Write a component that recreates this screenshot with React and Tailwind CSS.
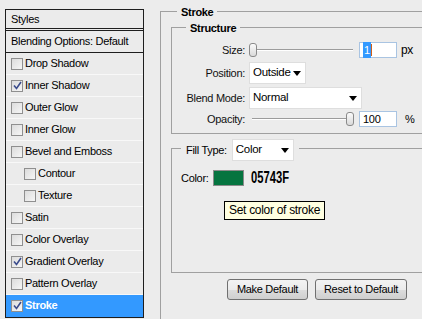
import React from 'react';

const styleRows = [
  { label: 'Drop Shadow' },
  { label: 'Inner Shadow', checked: true },
  { label: 'Outer Glow' },
  { label: 'Inner Glow' },
  { label: 'Bevel and Emboss' },
  { label: 'Contour', sub: true },
  { label: 'Texture', sub: true },
  { label: 'Satin' },
  { label: 'Color Overlay' },
  { label: 'Gradient Overlay', checked: true },
  { label: 'Pattern Overlay' },
  { label: 'Stroke', checked: true, active: true },
];

const Checkbox = ({ checked }) => (
  <span className="relative flex h-[12px] w-[12px] shrink-0 items-center justify-center border border-[#8f8f8f] bg-gradient-to-br from-[#dcdcdc] to-[#f6f6f6]">
    {checked && (
      <svg width="9" height="9" viewBox="0 0 9 9" className="absolute">
        <path d="M1 4.5 L3.5 7.5 L8 1" fill="none" stroke="#3b4c8c" strokeWidth="1.6" />
      </svg>
    )}
  </span>
);

const Arrow = () => (
  <svg width="8" height="5" viewBox="0 0 8 5" className="shrink-0">
    <path d="M0 0 H8 L4 5 Z" fill="#000" />
  </svg>
);

const Select = ({ value, width }) => (
  <div
    className="flex h-[22px] items-center justify-between border border-[#dedede] bg-white pl-[3px] pr-[4px] text-[11.5px] tracking-[-0.3px]"
    style={{ width }}
  >
    <span>{value}</span>
    <Arrow />
  </div>
);

const Slider = ({ pos }) => (
  <div className="relative h-[14px] w-[104px]">
    <div className="absolute left-[3px] right-0 top-[6px] h-[2px] border-t border-[#9c9c9c] border-b border-b-white" />
    <div
      className="absolute top-0 h-[14px] w-[8px] rounded-[3px] border border-[#8a8a8a] bg-gradient-to-b from-[#fbfbfb] to-[#d9d9d9]"
      style={{ left: pos }}
    />
  </div>
);

const Field = ({ children }) => (
  <div className="flex h-[16px] w-[38px] items-center border border-[#a9c4e2] bg-white pl-[3px] text-[11px]">
    {children}
  </div>
);

const Row = ({ label, children, className }) => (
  <div className={`flex items-center ${className || ''}`}>
    <span className="w-[73px] text-right text-[11px] text-[#111]">{label}</span>
    <div className="ml-[4px] flex items-center">{children}</div>
  </div>
);

const Button = ({ children, width }) => (
  <button
    className="h-[21px] rounded-[3px] border border-[#707070] bg-[linear-gradient(#f3f3f3_0%,#ebebeb_50%,#dddddd_51%,#cfcfcf_100%)] text-[11px] text-black"
    style={{ width }}
  >
    {children}
  </button>
);

export default function App() {
  return (
    <div
      className="flex h-[319px] w-[422px] overflow-hidden bg-[#ececec] tracking-[-0.3px] text-black"
      style={{ fontFamily: '"Liberation Sans", Arial, sans-serif' }}
    >
      {/* Styles list */}
      <div className="ml-[5px] mt-[9px] w-[139px] shrink-0 self-start border border-[#1e1e1e] bg-[#ebebeb] text-[11px]">
        <div className="flex h-[21px] items-center border-b-[3px] border-double border-[#1e1e1e] pl-[5px]">Styles</div>
        <div className="flex h-[22px] items-center border-b border-[#1e1e1e] pl-[5px]">Blending Options: Default</div>
        {styleRows.map((r) => (
          <div
            key={r.label}
            className={`flex h-[22px] items-center gap-[2px] border-b ${
              r.active ? 'border-[#3399ff] bg-[#3399ff] font-bold text-white' : 'border-[#f8f8f8]'
            } ${r.sub ? 'pl-[18px]' : 'pl-[5px]'}`}
          >
            <Checkbox checked={r.checked} />
            <span>{r.label}</span>
          </div>
        ))}
      </div>

      {/* Stroke settings */}
      <div className="flex-1 pl-[16px] pt-[11px]">
        <div className="relative h-[340px] w-[320px] border-l border-t border-[#a0a0a0] pl-[10px] pt-[15px]">
          <span className="absolute left-[16px] top-[-8px] bg-[#ececec] px-[4px] text-[11px] font-bold">Stroke</span>

          {/* Structure */}
          <div className="relative h-[107px] border-b border-l border-t border-[#a0a0a0] pt-[13px]">
            <span className="absolute left-[14px] top-[-8px] bg-[#ececec] px-[4px] text-[11px] font-bold">Structure</span>
            <Row label="Size:">
              <Slider pos={0} />
              <div className="ml-[6px]">
                <Field>
                  <span className="bg-[#3399ff] px-[1px] text-white">1</span>
                  <span className="h-[12px] w-[1px] bg-[#d0601a]" />
                </Field>
              </div>
              <span className="ml-[4px] text-[12px]">px</span>
            </Row>
            <Row label="Position:" className="mt-[3px]">
              <Select value="Outside" width={57} />
            </Row>
            <Row label="Blend Mode:" className="mt-[3px]">
              <Select value="Normal" width={113} />
            </Row>
            <Row label="Opacity:" className="mt-[2px]">
              <Slider pos={97} />
              <div className="ml-[6px]">
                <Field>100</Field>
              </div>
              <span className="ml-[8px] text-[11px]">%</span>
            </Row>
          </div>

          {/* Fill */}
          <div className="relative mt-[14px] h-[125px] border-b border-l border-t border-[#a0a0a0] pl-[9px] pt-[21px]">
            <div className="absolute left-[9px] top-[-10px] flex items-center gap-[5px] bg-[#ececec] px-[5px] text-[11px]">
              <span>Fill Type:</span>
              <Select value="Color" width={62} />
            </div>
            <div className="flex items-center">
              <span className="text-[11px]">Color:</span>
              <div className="ml-[4px] h-[16px] w-[31px] border border-[#8a8a8a] bg-[#05743f]" />
              <span className="ml-[7px] inline-block origin-left scale-x-[0.7] text-[16px] font-bold leading-none tracking-normal">
                05743F
              </span>
            </div>
            <div className="absolute left-[52px] top-[52px] whitespace-nowrap border border-black bg-[#ffffe1] px-[4px] py-[0px] text-[12px] leading-[17px]">
              Set color of stroke
            </div>
          </div>

          <div className="ml-[56px] mt-[6px] flex gap-[7px]">
            <Button width={81}>Make Default</Button>
            <Button width={92}>Reset to Default</Button>
          </div>
        </div>
      </div>
    </div>
  );
}
